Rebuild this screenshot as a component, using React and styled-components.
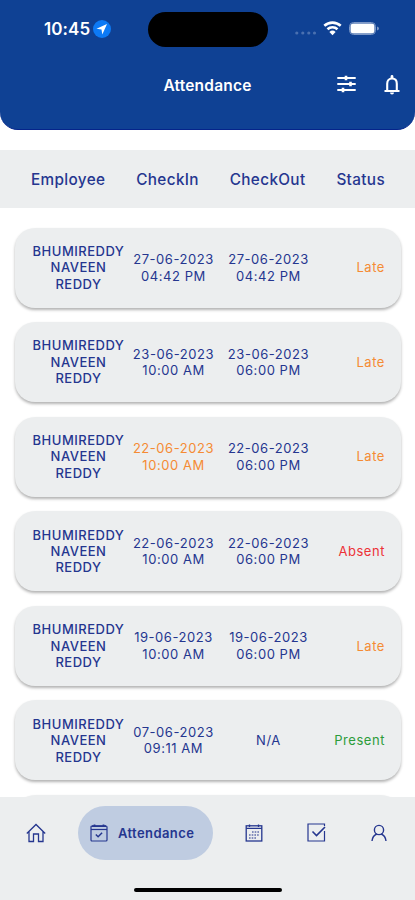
import React from 'react'
import styled, { createGlobalStyle, ThemeProvider } from 'styled-components'

const theme = {
  main: '#0f4194',
  text: '#25368f',
  shade: '#eceeef',
  active: '#bfcce1',
  late: '#f58b34',
  absent: '#ec3237',
  present: '#2c9c3a',
}

const GlobalStyle = createGlobalStyle`
  * {
    box-sizing: border-box;
  }
  body {
    margin: 0;
    background-color: white;
    font-family: Inter, "Liberation Sans", sans-serif;
  }
  svg {
    display: block;
    flex-shrink: 0;
  }
`

const Container = styled.div`
  width: 100%;
  height: 900px;
  display: flex;
  flex-direction: column;
  overflow: hidden;
`

const Header = styled.header`
  height: 130px;
  flex-shrink: 0;
  background-color: ${({ theme }) => theme.main};
  border-bottom: 1px solid #05248b;
  border-radius: 0 0 18px 18px;
  color: white;
`

const StatusBar = styled.div`
  height: 58px;
  display: grid;
  grid-template-columns: 148px 120px 1fr;
  align-items: center;
`

const Clock = styled.div`
  display: flex;
  align-items: center;
  gap: 3px;
  padding-left: 44px;
  font-size: 17px;
  font-weight: 600;
  letter-spacing: 0.1px;
`

const Island = styled.div`
  height: 35px;
  border-radius: 18px;
  background-color: black;
`

const Signals = styled.div`
  display: flex;
  align-items: center;
  padding-left: 27px;
`

const TitleBar = styled.div`
  height: 54px;
  display: grid;
  grid-template-columns: 1fr auto 1fr;
  align-items: center;
  h1 {
    margin: 0;
    font-size: 15.5px;
    font-weight: 600;
    letter-spacing: 0.2px;
  }
`

const Actions = styled.div`
  display: flex;
  justify-content: flex-end;
  gap: 28px;
  padding-right: 15px;
`

const Columns = styled.div`
  height: 58px;
  margin-top: 20px;
  flex-shrink: 0;
  display: flex;
  align-items: center;
  justify-content: space-between;
  padding: 0 30px 0 31px;
  background-color: ${({ theme }) => theme.shade};
  color: ${({ theme }) => theme.text};
  font-size: 15.3px;
  font-weight: 500;
  letter-spacing: 0.35px;
`

const List = styled.div`
  flex: 1;
  min-height: 0;
  overflow: hidden;
  display: flex;
  flex-direction: column;
  gap: 14.6px;
  padding: 19.5px 14px 0 15px;
`

const Card = styled.div`
  height: 80px;
  flex-shrink: 0;
  display: grid;
  grid-template-columns: 95px 95px 95px 1fr;
  align-items: center;
  padding: 0 16px;
  border-radius: 20px;
  background-color: ${({ theme }) => theme.shade};
  box-shadow: 0 2px 3px rgba(0, 0, 0, 0.3);
  color: ${({ theme }) => theme.text};
  font-size: 13px;
  line-height: 16.4px;
  letter-spacing: 0.55px;
`

const Name = styled.div`
  text-align: center;
  font-weight: 500;
  letter-spacing: 0.5px;
`

const Time = styled.div`
  text-align: center;
  color: ${({ theme, $late }) => ($late ? theme.late : theme.text)};
`

const Status = styled.div`
  text-align: right;
  color: ${({ theme, $kind }) => theme[$kind.toLowerCase()]};
`

const BottomNav = styled.nav`
  height: 103px;
  flex-shrink: 0;
  display: flex;
  flex-direction: column;
  align-items: center;
  background-color: ${({ theme }) => theme.shade};
  color: ${({ theme }) => theme.text};
`

const Tabs = styled.div`
  width: 100%;
  height: 71px;
  display: flex;
  align-items: center;
  justify-content: space-between;
  padding: 0 27px 0 26px;
`

const ActiveTab = styled.div`
  width: 135px;
  height: 54px;
  margin: 0 -12px;
  display: flex;
  align-items: center;
  gap: 10px;
  padding-left: 12px;
  border-radius: 27px;
  background-color: ${({ theme }) => theme.active};
  font-size: 13px;
  font-weight: 600;
  letter-spacing: 0.4px;
`

const HomeIndicator = styled.div`
  width: 148px;
  height: 4px;
  margin-top: 20px;
  border-radius: 2px;
  background-color: black;
`

const rows = [
  { checkIn: ['27-06-2023', '04:42 PM'], checkOut: ['27-06-2023', '04:42 PM'], status: 'Late' },
  { checkIn: ['23-06-2023', '10:00 AM'], checkOut: ['23-06-2023', '06:00 PM'], status: 'Late' },
  { checkIn: ['22-06-2023', '10:00 AM'], checkOut: ['22-06-2023', '06:00 PM'], status: 'Late', late: true },
  { checkIn: ['22-06-2023', '10:00 AM'], checkOut: ['22-06-2023', '06:00 PM'], status: 'Absent' },
  { checkIn: ['19-06-2023', '10:00 AM'], checkOut: ['19-06-2023', '06:00 PM'], status: 'Late' },
  { checkIn: ['07-06-2023', '09:11 AM'], checkOut: ['N/A'], status: 'Present' },
]

function Lines({ items }){
  return items.map(item => <div key={item}>{item}</div>)
}

function LocationIcon(){
  return (
    <svg width="18" height="18" viewBox="0 0 18 18">
      <circle cx="9" cy="9" r="9" fill="#0d7af5"/>
      <path d="M14 4 3.5 8.8l5 .7.8 5z" fill="white"/>
    </svg>
  )
}

function SignalIcons(){
  return (
    <svg width="90" height="20" viewBox="0 0 90 20">
      <g fill="#4a70b0">
        <circle cx="1.8" cy="14" r="1.6"/>
        <circle cx="7.8" cy="14" r="1.6"/>
        <circle cx="13.8" cy="14" r="1.6"/>
        <circle cx="19.5" cy="14" r="1.6"/>
      </g>
      <g fill="none" stroke="white" strokeWidth="2.6">
        <path d="M29.3 6.8a12.2 12.2 0 0 1 16.4 0"/>
        <path d="M32.5 10.2a7.4 7.4 0 0 1 10 0"/>
      </g>
      <path d="M34.4 13a4.6 4.6 0 0 1 6.2 0l-3.1 3.2z" fill="white"/>
      <rect x="54.5" y="3.5" width="26" height="12" rx="4" fill="none" stroke="#7d98c7"/>
      <rect x="55.5" y="4.5" width="24" height="10" rx="3" fill="white"/>
      <path d="M82 7.5v4q2-.5 2-2t-2-2" fill="#7d98c7"/>
    </svg>
  )
}

function FilterIcon(){
  return (
    <svg width="19" height="18" viewBox="0 0 19 18" stroke="white" strokeWidth="1.8">
      <path d="M.3 3h18.4M.3 9h18.4M.3 15h18.4"/>
      <path d="M9 .8v4.400M13.500 6.800v4.400M6 12.800v4.400" strokeWidth="2.6"/>
    </svg>
  )
}

function BellIcon(){
  return (
    <svg width="16" height="20" viewBox="0 0 16 20">
      <path d="M.5 16h15M3.200 16V8.700C3.200 5.500 5 3.500 8 3.500s4.800 2 4.800 5.200V16" fill="none" stroke="white" strokeWidth="2.1"/>
      <path d="M6.6 3V1.5a1.4 1.4 0 0 1 2.8 0V3zM6 17.5h4a2 2 0 0 1-4 0" fill="white"/>
    </svg>
  )
}

function HomeIcon(){
  return (
    <svg width="20" height="20" viewBox="0 0 20 20" fill="none" stroke="currentColor" strokeWidth="1.3">
      <path d="M.8 10.5 10 1.5l9.2 9M3 8.8v9.7h4.5V11h5v7.5H17V8.8"/>
    </svg>
  )
}

function AttendanceIcon(){
  return (
    <svg width="18" height="18" viewBox="0 0 18 18" fill="none" stroke="currentColor" strokeWidth="1.2">
      <rect x="1" y="2" width="16" height="15" rx="1"/>
      <path d="M1 5.5h16"/>
      <path d="M2 2.2h14M4.5 .5v2M13.5 .5v2" strokeWidth="1.8"/>
      <path d="m5.8 10.5 2.3 2.2 4-4" strokeWidth="1.5"/>
    </svg>
  )
}

function CalendarIcon(){
  return (
    <svg width="18" height="18" viewBox="0 0 18 18" fill="none" stroke="currentColor" strokeWidth="1.3">
      <rect x="1.2" y="1.8" width="15.6" height="15.2"/>
      <path d="M1.2 4.4h15.6M4.5 .5v2.5M13.5 .5v2.5"/>
      <path d="M7 8h7M4 11h10M4 14h7" strokeWidth="1.6" strokeDasharray="1.6 1.1" opacity=".7"/>
    </svg>
  )
}

function TaskIcon(){
  return (
    <svg width="19" height="19" viewBox="0 0 19 19" fill="none" stroke="currentColor" strokeWidth="1.2">
      <path d="M17.5 3V1H1v17h16.5V8"/>
      <path d="m5.5 8.5 4 4 8.5-8.5" strokeWidth="1.6"/>
    </svg>
  )
}

function PersonIcon(){
  return (
    <svg width="18" height="18" viewBox="0 0 18 18" fill="none" stroke="currentColor" strokeWidth="1.4">
      <circle cx="9" cy="6" r="4.6"/>
      <path d="M2 17c.4-3.7 2.2-6 4.8-7M16 17c-.4-3.7-2.2-6-4.8-7"/>
    </svg>
  )
}

export default function App(){
  return (
    <ThemeProvider theme={theme}>
      <GlobalStyle/>
      <Container>
        <Header>
          <StatusBar>
            <Clock>10:45<LocationIcon/></Clock>
            <Island/>
            <Signals><SignalIcons/></Signals>
          </StatusBar>
          <TitleBar>
            <div/>
            <h1>Attendance</h1>
            <Actions><FilterIcon/><BellIcon/></Actions>
          </TitleBar>
        </Header>
        <Columns>
          <span>Employee</span>
          <span>CheckIn</span>
          <span>CheckOut</span>
          <span>Status</span>
        </Columns>
        <List>
          {rows.map((row, i) => (
            <Card key={i}>
              <Name><Lines items={['BHUMIREDDY', 'NAVEEN', 'REDDY']}/></Name>
              <Time $late={row.late}><Lines items={row.checkIn}/></Time>
              <Time><Lines items={row.checkOut}/></Time>
              <Status $kind={row.status}>{row.status}</Status>
            </Card>
          ))}
          <Card/>
        </List>
        <BottomNav>
          <Tabs>
            <HomeIcon/>
            <ActiveTab><AttendanceIcon/>Attendance</ActiveTab>
            <CalendarIcon/>
            <TaskIcon/>
            <PersonIcon/>
          </Tabs>
          <HomeIndicator/>
        </BottomNav>
      </Container>
    </ThemeProvider>
  )
}
